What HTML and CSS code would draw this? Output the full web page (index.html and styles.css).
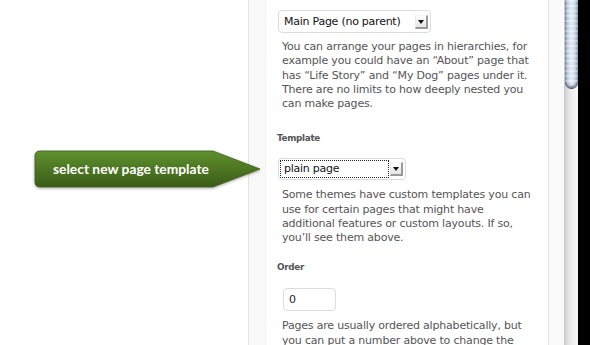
FILE: index.html
```html
<!DOCTYPE html>
<html>
<head>
<meta charset="utf-8">
<link rel="stylesheet" href="styles.css">
</head>
<body>
<div class="page">
  <div class="stage">
    <div class="callout">
      <svg class="callout-shape" width="229" height="40" viewBox="0 0 229 40">
        <defs>
          <linearGradient id="g" x1="0" y1="0" x2="0" y2="1">
            <stop offset="0" stop-color="#5f902d"/>
            <stop offset="1" stop-color="#3a5c17"/>
          </linearGradient>
        </defs>
        <path d="M7 1 H180 L227 19 L180 37 H7 Q2 37 2 32 V6 Q2 1 7 1 Z" fill="url(#g)" stroke="#3d5f1a" stroke-width="0.8"/>
      </svg>
      <span class="callout-text">select new page template</span>
    </div>
  </div>
  <div class="edge-left"></div>
  <div class="content">
    <div class="select select-wide">
      <span class="select-value">Main Page (no parent)</span>
      <span class="select-arrow"></span>
    </div>
    <p class="desc">You can arrange your pages in hierarchies, for example you could have an “About” page that has “Life Story” and “My Dog” pages under it. There are no limits to how deeply nested you can make pages.</p>

    <h4 class="label">Template</h4>
    <div class="select select-narrow">
      <span class="select-value focused">plain page</span>
      <span class="select-arrow"></span>
    </div>
    <p class="desc">Some themes have custom templates you can use for certain pages that might have additional features or custom layouts. If so, you’ll see them above.</p>

    <h4 class="label label-order">Order</h4>
    <div class="input">0</div>
    <p class="desc">Pages are usually ordered alphabetically, but you can put a number above to change the order pages appear in.</p>
  </div>
  <div class="edge-right"></div>
  <div class="scrollbar"><div class="thumb"></div></div>
  <div class="frame"></div>
</div>
</body>
</html>
```

FILE: styles.css
```css
html, body {
  margin: 0;
  padding: 0;
  background: #fff;
}
.page {
  display: flex;
  width: 590px;
  height: 345px;
  overflow: hidden;
  font-family: "DejaVu Sans", "Liberation Sans", sans-serif;
}
.stage {
  width: 248px;
  flex: none;
  background: #fff;
  position: relative;
}
.callout {
  position: absolute;
  left: 33px;
  top: 150px;
  width: 229px;
  height: 38px;
  z-index: 5;
  display: flex;
  align-items: center;
}
.callout-shape {
  position: absolute;
  left: 0;
  top: 0;
  filter: drop-shadow(0 1px 1.5px rgba(0, 0, 0, 0.35));
}
.callout-text {
  position: relative;
  margin-left: 20px;
  margin-top: -1px;
  font-family: "Lato", "Open Sans", sans-serif;
  font-weight: 700;
  font-size: 13.8px;
  color: #fff;
}
.edge-left {
  width: 16px;
  flex: none;
  background: #f9f9f9;
  border-left: 1px solid #e4e4e4;
  border-right: 1px solid #f0f0f0;
}
.content {
  width: 271px;
  flex: none;
  padding: 10px 0 0 11px;
  background: #fff;
  color: #555;
}
.select {
  box-sizing: border-box;
  height: 23px;
  margin-left: 1px;
  border: 1px solid #dcdcdc;
  border-radius: 4px;
  display: flex;
  align-items: center;
  padding: 0 2px 0 5px;
  background: #fff;
}
.select-wide { width: 153px; }
.select-narrow { width: 128px; height: 22px; padding-left: 2px; }
.select-value {
  flex: 1;
  font-size: 11px;
  letter-spacing: -0.25px;
  color: #111;
  line-height: 14px;
}
.select-wide .select-value { margin-right: 2px; }
.select-value.focused {
  outline: 1px dotted #222;
  padding-left: 3px;
  line-height: 16px;
  margin-right: 2px;
}
.select-arrow {
  width: 13px;
  height: 14px;
  box-sizing: border-box;
  flex: none;
  position: relative;
  background: linear-gradient(#fdfdfd, #e6e6e6);
  border-top: 1px solid #f4f4f4;
  border-left: 1px solid #eaeaea;
  border-right: 2px solid #9a9a9a;
  border-bottom: 2px solid #9a9a9a;
}
.select-arrow::after {
  content: "";
  position: absolute;
  left: 2px;
  top: 4px;
  border-left: 3px solid transparent;
  border-right: 3px solid transparent;
  border-top: 4px solid #111;
}
.desc {
  margin: 7px 0 0 5px;
  font-size: 11px;
  line-height: 14.25px;
  letter-spacing: -0.19px;
  color: #555;
  width: 251px;
}
.label {
  margin: 22px 0 0 0;
  font-size: 8.8px;
  line-height: 11px;
  font-weight: 700;
  letter-spacing: -0.3px;
  color: #555;
}
.label-order { margin-top: 17px; }
.label + .select { margin-top: 14px; }
.label + .input { margin-top: 15px; }
.select-narrow + .desc { margin-top: 8px; }
.input {
  box-sizing: border-box;
  width: 53px;
  height: 23px;
  margin-left: 6px;
  border: 1px solid #dcdcdc;
  border-radius: 4px;
  font-size: 11px;
  color: #222;
  padding: 4px 0 0 5px;
  line-height: 14px;
}
.input + .desc { margin-top: 8px; }
.edge-right {
  width: 15px;
  flex: none;
  background: #fafafa;
  border-left: 1px solid #e6e6e6;
}
.scrollbar {
  width: 14px;
  flex: none;
  background: linear-gradient(90deg, #c9c9c9 0%, #e3e3e3 30%, #f3f3f3 70%, #f6f6f6 100%);
  position: relative;
}
.thumb {
  position: absolute;
  left: 1px;
  right: 0;
  top: -8px;
  height: 96px;
  border-radius: 0 0 7px 7px;
  background:
    repeating-linear-gradient(180deg, rgba(255,255,255,0.0) 0 3px, rgba(255,255,255,0.35) 3px 5px),
    linear-gradient(90deg, #7f93b0 0%, #b7c6d9 18%, #e4ebf3 45%, #d2dcea 70%, #8ea2bf 100%);
  border-bottom: 1px solid #3f4e66;
  box-shadow: inset 0 -2px 2px rgba(40, 55, 80, 0.6);
}
.frame {
  flex: 1;
  background: #000;
}
```
